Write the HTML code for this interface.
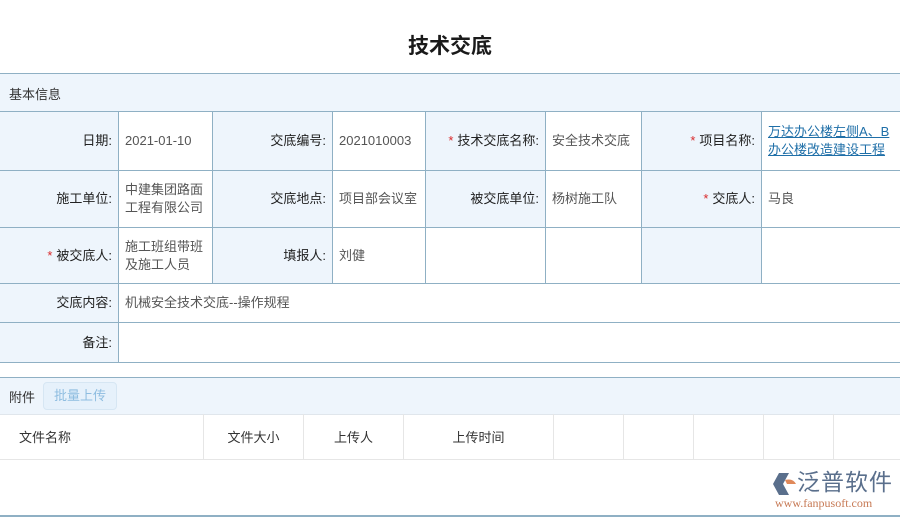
<!DOCTYPE html>
<html><head><meta charset="utf-8"><style>
*{margin:0;padding:0;box-sizing:border-box}
body{width:900px;height:518px;background:#fff;position:relative;overflow:hidden;font-family:"Liberation Sans","Noto Sans CJK SC",sans-serif;font-size:13px;color:#333}
.a{position:absolute}
.c{position:absolute;border-right:1px solid #8fb0c4;border-bottom:1px solid #8fb0c4;display:flex;align-items:center;padding:0 6px;line-height:18px}
.l{background:#eef5fc;justify-content:flex-end;color:#222}
.v{background:#fff;color:#555}
.s{color:#d9292b;margin-right:4px}
.h{position:absolute;top:414px;height:46px;border-right:1px solid #e6e6e6;border-bottom:1px solid #e6e6e6;display:flex;align-items:center;justify-content:center;color:#333}
</style></head><body>
<div class="a" style="left:0;top:30px;width:900px;text-align:center;font-size:21px;font-weight:bold;color:#1a1a1a">技术交底</div>
<div class="a" style="left:0;top:73px;width:900px;height:39px;background:#eef5fc;border-top:1px solid #8fb0c4;border-bottom:1px solid #8fb0c4;padding:10px 9px;font-size:13px">基本信息</div>

<div class="c l" style="left:0;top:112px;width:119px;height:59px">日期:</div>
<div class="c v" style="left:119px;top:112px;width:94px;height:59px">2021-01-10</div>
<div class="c l" style="left:213px;top:112px;width:120px;height:59px">交底编号:</div>
<div class="c v" style="left:333px;top:112px;width:93px;height:59px">2021010003</div>
<div class="c l" style="left:426px;top:112px;width:120px;height:59px"><span class="s">*</span>技术交底名称:</div>
<div class="c v" style="left:546px;top:112px;width:96px;height:59px">安全技术交底</div>
<div class="c l" style="left:642px;top:112px;width:120px;height:59px"><span class="s">*</span>项目名称:</div>
<div class="c v" style="left:762px;top:112px;width:138px;height:59px;color:#1f6fa8;text-decoration:underline;border-right:none">万达办公楼左侧A、B办公楼改造建设工程</div>

<div class="c l" style="left:0;top:171px;width:119px;height:57px">施工单位:</div>
<div class="c v" style="left:119px;top:171px;width:94px;height:57px">中建集团路面工程有限公司</div>
<div class="c l" style="left:213px;top:171px;width:120px;height:57px">交底地点:</div>
<div class="c v" style="left:333px;top:171px;width:93px;height:57px">项目部会议室</div>
<div class="c l" style="left:426px;top:171px;width:120px;height:57px">被交底单位:</div>
<div class="c v" style="left:546px;top:171px;width:96px;height:57px">杨树施工队</div>
<div class="c l" style="left:642px;top:171px;width:120px;height:57px"><span class="s">*</span>交底人:</div>
<div class="c v" style="left:762px;top:171px;width:138px;height:57px;border-right:none">马良</div>

<div class="c l" style="left:0;top:228px;width:119px;height:56px"><span class="s">*</span>被交底人:</div>
<div class="c v" style="left:119px;top:228px;width:94px;height:56px">施工班组带班及施工人员</div>
<div class="c l" style="left:213px;top:228px;width:120px;height:56px">填报人:</div>
<div class="c v" style="left:333px;top:228px;width:93px;height:56px">刘健</div>
<div class="c v" style="left:426px;top:228px;width:120px;height:56px"></div>
<div class="c v" style="left:546px;top:228px;width:96px;height:56px"></div>
<div class="c l" style="left:642px;top:228px;width:120px;height:56px"></div>
<div class="c v" style="left:762px;top:228px;width:138px;height:56px;border-right:none"></div>

<div class="c l" style="left:0;top:284px;width:119px;height:39px">交底内容:</div>
<div class="c v" style="left:119px;top:284px;width:781px;height:39px;border-right:none">机械安全技术交底--操作规程</div>
<div class="c l" style="left:0;top:323px;width:119px;height:40px">备注:</div>
<div class="c v" style="left:119px;top:323px;width:781px;height:40px;border-right:none"></div>

<div class="a" style="left:0;top:377px;width:900px;height:38px;background:#eef5fc;border-top:1px solid #8fb0c4;border-bottom:1px solid #e0e6ec"></div>
<div class="a" style="left:9px;top:387px">附件</div>
<div class="a" style="left:43px;top:382px;width:74px;height:28px;border:1px solid #d6e6f3;border-radius:4px;background:#e6f1fb;color:#8ebde0;text-align:center;line-height:26px">批量上传</div>

<div class="h" style="left:0;width:204px;justify-content:flex-start;padding-left:19px">文件名称</div>
<div class="h" style="left:204px;width:100px">文件大小</div>
<div class="h" style="left:304px;width:100px">上传人</div>
<div class="h" style="left:404px;width:150px">上传时间</div>
<div class="h" style="left:554px;width:70px"></div>
<div class="h" style="left:624px;width:70px"></div>
<div class="h" style="left:694px;width:70px"></div>
<div class="h" style="left:764px;width:70px"></div>
<div class="h" style="left:834px;width:66px;border-right:none"></div>

<svg class="a" style="left:771px;top:472px" width="26" height="24" viewBox="0 0 26 24"><path d="M8 1 L18 1 L12 12 L18 23 L8 23 L2 12 Z" fill="#5a6f8c"/><path d="M14 8 Q22 6 25 12 L16 12 Z" fill="#e0895a"/></svg>
<div class="a" style="left:797px;top:468px;font-size:23px;line-height:28px;color:#5a6f8c;letter-spacing:1px">泛普软件</div>
<div class="a" style="left:775px;top:497px;font-family:'Liberation Serif',serif;font-size:12px;line-height:13px;color:#c77a55">www.fanpusoft.com</div>
<div class="a" style="left:0;top:515px;width:900px;height:2px;background:#8fb0c4"></div>
</body></html>
